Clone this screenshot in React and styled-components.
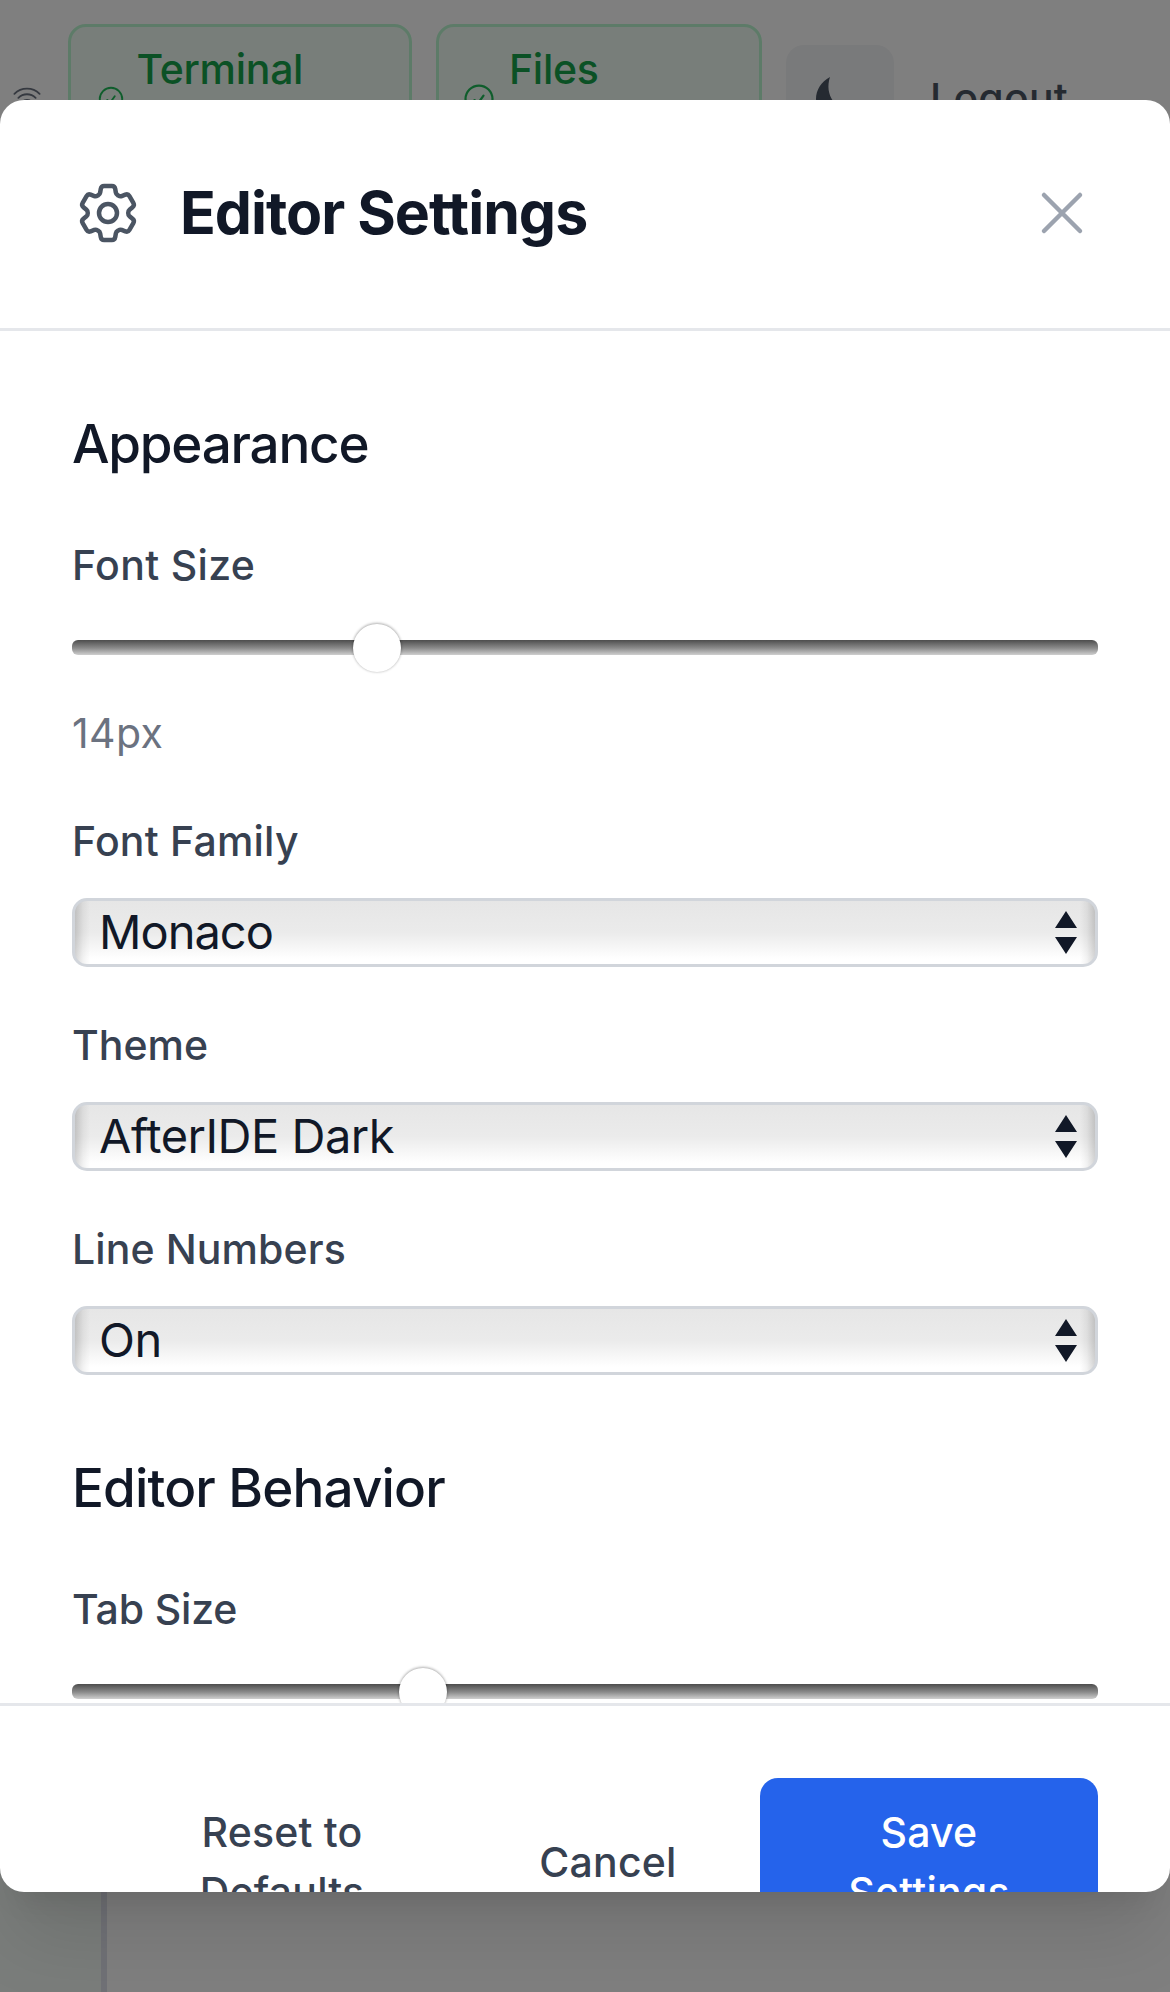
import React from "react";
import styled, { createGlobalStyle } from "styled-components";
import {
  HiOutlineCheckCircle,
  HiOutlineCog6Tooth,
  HiOutlineWifi,
  HiOutlineXMark,
} from "react-icons/hi2";

const Global = createGlobalStyle`
  *, *::before, *::after { box-sizing: border-box; }
  body { margin: 0; background: #fff; font-family: Inter, "Liberation Sans", sans-serif; }
  button { font-family: inherit; margin: 0; }
`;

const Page = styled.div`
  position: relative;
  width: 1170px;
  height: 1992px;
  overflow: hidden;
  background: #fff;
`;

const TopBar = styled.header`
  display: flex;
  align-items: flex-start;
  height: 204px;
  padding: 24px 72px 0 12px;
`;

const WifiSlot = styled.div`
  width: 56px;
  padding-top: 59px;
  color: #6b7280;
  svg { display: block; }
`;

const StatusPill = styled.div`
  display: flex;
  align-items: center;
  width: ${(p) => p.$width}px;
  height: 144px;
  margin-right: 24px;
  padding-left: ${(p) => p.$inset}px;
  gap: ${(p) => p.$gap}px;
  border: 3px solid #bbf7d0;
  border-radius: 18px;
  background: #f0fdf4;
  color: #16a34a;
  svg { flex: none; margin-top: 6px; color: #1fbb58; }
`;

const PillLabel = styled.span`
  align-self: flex-start;
  padding-top: 12px;
  font-size: 41px;
  font-weight: 500;
  line-height: 60px;
  letter-spacing: -0.3px;
`;

const ThemeToggle = styled.button`
  display: flex;
  align-items: flex-start;
  width: 108px;
  height: 108px;
  margin-top: 21px;
  padding: 32px 0 0 30px;
  border: 0;
  border-radius: 18px;
  background: #f3f4f6;
  color: #4b5563;
`;

const Logout = styled.span`
  margin: 44px 0 0 36px;
  font-size: 41px;
  font-weight: 500;
  line-height: 60px;
  letter-spacing: 0.2px;
  color: #4b5563;
`;

const Workspace = styled.main`
  display: flex;
  height: 1788px;
`;

const SideRail = styled.aside`
  width: 107px;
  border-right: 6px solid #e0e2ec;
  background: #f4faf6;
`;

const Backdrop = styled.div`
  position: absolute;
  inset: 0;
  padding: 100px 0;
  background: rgba(0, 0, 0, 0.5);
`;

const Modal = styled.section`
  display: flex;
  flex-direction: column;
  height: 1792px;
  overflow: hidden;
  border-radius: 24px;
  background: #fff;
  box-shadow: 0 60px 75px -15px rgba(0, 0, 0, 0.1), 0 24px 30px -18px rgba(0, 0, 0, 0.1);
`;

const ModalHeader = styled.div`
  display: flex;
  flex: none;
  align-items: center;
  height: 231px;
  padding: 0 72px 2px;
  gap: 36px;
  border-bottom: 3px solid #e5e7eb;
  color: #4b5563;
`;

const Title = styled.h2`
  flex: 1;
  margin: 0;
  font-size: 59px;
  font-weight: 650;
  line-height: 84px;
  letter-spacing: -1px;
  color: #111827;
`;

const CloseButton = styled.button`
  display: flex;
  padding: 0;
  border: 0;
  background: none;
  color: #9ca3af;
`;

const ModalBody = styled.div`
  display: flex;
  flex: none;
  flex-direction: column;
  height: 1372px;
  padding: 71px 72px 0;
  gap: 71px;
  overflow: hidden;
`;

const Group = styled.div`
  display: flex;
  flex: none;
  flex-direction: column;
  gap: 48px;
`;

const GroupTitle = styled.h3`
  margin: 0 0 1px;
  font-size: 53px;
  font-weight: 550;
  line-height: 84px;
  letter-spacing: ${(p) => p.$track}px;
  color: #111827;
`;

const Field = styled.div`
  display: flex;
  flex-direction: column;
`;

const Label = styled.label`
  font-size: 41px;
  font-weight: 500;
  line-height: 60px;
  letter-spacing: ${(p) => p.$track || 0}px;
  color: #374151;
`;

const Track = styled.div`
  display: flex;
  align-items: center;
  height: 15px;
  margin: 45px 0 48px;
  padding-left: ${(p) => p.$offset}px;
  border-radius: 6px;
  background: linear-gradient(#4d4d4d, #8c8c8c 55%, #cfcfcf);
`;

const Thumb = styled.span`
  width: 48px;
  height: 48px;
  flex: none;
  margin-top: 1px;
  border-radius: 50%;
  background: #fff;
  box-shadow: 0 0 3px rgba(0, 0, 0, 0.22), 0 -1px 3px rgba(0, 0, 0, 0.22);
`;

const Value = styled.span`
  font-size: 41px;
  line-height: 60px;
  letter-spacing: 0.4px;
  color: #6b7280;
`;

const SelectBox = styled.div`
  display: flex;
  align-items: center;
  justify-content: space-between;
  height: 69px;
  margin-top: 27px;
  padding: 0 17px 0 24px;
  border: 3px solid #d1d5db;
  border-radius: 15px;
  background:
    linear-gradient(90deg, rgba(0,0,0,.17), rgba(0,0,0,.05) 8px, rgba(0,0,0,0) 15px, rgba(0,0,0,0) calc(100% - 15px), rgba(0,0,0,.05) calc(100% - 8px), rgba(0,0,0,.17)),
    linear-gradient(#e6e6e6, #ebebeb 50%, #fff 92%);
  color: #111827;
`;

const SelectText = styled.span`
  padding-bottom: 2px;
  font-size: 47px;
  line-height: 61px;
  letter-spacing: ${(p) => p.$track}px;
`;

const ModalFooter = styled.div`
  display: flex;
  flex: none;
  justify-content: flex-end;
  height: 315px;
  padding: 72px;
  gap: 36px;
  border-top: 3px solid #e5e7eb;
`;

const Button = styled.button`
  width: ${(p) => p.$width}px;
  height: 168px;
  padding: 24px ${(p) => p.$inset}px;
  border: 0;
  border-radius: 18px;
  background: ${(p) => (p.$primary ? "#2563eb" : "transparent")};
  color: ${(p) => (p.$primary ? "#fff" : "#374151")};
  font-size: 41px;
  font-weight: ${(p) => (p.$primary ? 550 : 500)};
  line-height: 60px;
  letter-spacing: 0.2px;
`;

const MoonIcon = () => (
  <svg width="48" height="48" viewBox="0 0 48 48" fill="currentColor">
    <path d="M14 0C5 5 0 13 0 22c0 14 11 24 24 24 9 0 17-5 21-13-3 1-5 1-8 1C20 34 8 18 14 0Z" />
  </svg>
);

const Arrows = () => (
  <svg width="24" height="45" viewBox="0 0 24 45" fill="currentColor">
    <path d="M12 1L23 18H1ZM12 44L1 27H23Z" />
  </svg>
);

const Select = ({ label, value, labelTrack, track }) => (
  <Field>
    <Label $track={labelTrack}>{label}</Label>
    <SelectBox>
      <SelectText $track={track}>{value}</SelectText>
      <Arrows />
    </SelectBox>
  </Field>
);

export default function App() {
  return (
    <Page>
      <Global />
      <TopBar>
        <WifiSlot><HiOutlineWifi size={30} /></WifiSlot>
        <StatusPill $width={344} $inset={25} $gap={10.5}>
          <HiOutlineCheckCircle size={30} />
          <PillLabel>Terminal</PillLabel>
        </StatusPill>
        <StatusPill $width={326} $inset={22} $gap={12}>
          <HiOutlineCheckCircle size={36} />
          <PillLabel>Files</PillLabel>
        </StatusPill>
        <ThemeToggle aria-label="Toggle theme"><MoonIcon /></ThemeToggle>
        <Logout>Logout</Logout>
      </TopBar>
      <Workspace><SideRail /></Workspace>
      <Backdrop>
        <Modal>
          <ModalHeader>
            <HiOutlineCog6Tooth size={72} />
            <Title>Editor Settings</Title>
            <CloseButton aria-label="Close"><HiOutlineXMark size={72} /></CloseButton>
          </ModalHeader>
          <ModalBody>
            <Group>
              <GroupTitle $track={-1.25}>Appearance</GroupTitle>
              <Field>
                <Label $track={0.35}>Font Size</Label>
                <Track $offset={280.5}><Thumb /></Track>
                <Value>14px</Value>
              </Field>
              <Select label="Font Family" labelTrack={0.2} value="Monaco" track={-1} />
              <Select label="Theme" value="AfterIDE Dark" track={-0.5} />
              <Select label="Line Numbers" labelTrack={0.1} value="On" track={-0.5} />
            </Group>
            <Group>
              <GroupTitle $track={-0.85}>Editor Behavior</GroupTitle>
              <Field>
                <Label $track={-0.15}>Tab Size</Label>
                <Track $offset={327}><Thumb /></Track>
              </Field>
            </Group>
          </ModalBody>
          <ModalFooter>
            <Button $width={348} $inset={72}>Reset to Defaults</Button>
            <Button $width={232} $inset={36}>Cancel</Button>
            <Button $width={338} $inset={72} $primary>Save Settings</Button>
          </ModalFooter>
        </Modal>
      </Backdrop>
    </Page>
  );
}
